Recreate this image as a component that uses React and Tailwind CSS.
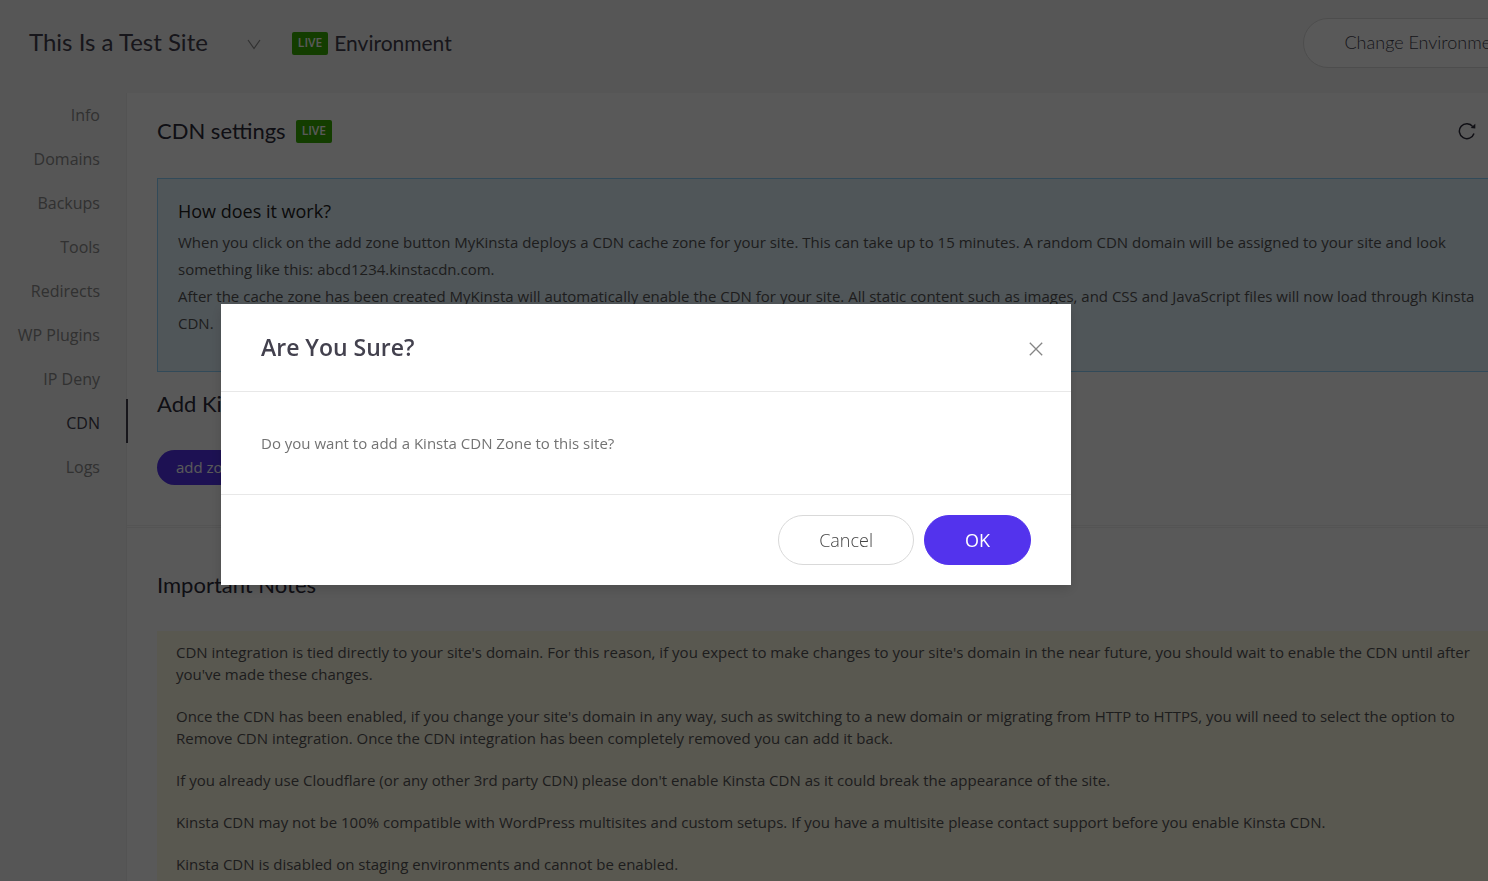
import { useState } from 'react';

const navItems = ['Info', 'Domains', 'Backups', 'Tools', 'Redirects', 'WP Plugins', 'IP Deny', 'CDN', 'Logs'];

const notes = [
    "CDN integration is tied directly to your site's domain. For this reason, if you expect to make changes to your site's domain in the near future, you should wait to enable the CDN until after you've made these changes.",
    "Once the CDN has been enabled, if you change your site's domain in any way, such as switching to a new domain or migrating from HTTP to HTTPS, you will need to select the option to Remove CDN integration. Once the CDN integration has been completely removed you can add it back.",
    "If you already use Cloudflare (or any other 3rd party CDN) please don't enable Kinsta CDN as it could break the appearance of the site.",
    'Kinsta CDN may not be 100% compatible with WordPress multisites and custom setups. If you have a multisite please contact support before you enable Kinsta CDN.',
    'Kinsta CDN is disabled on staging environments and cannot be enabled.',
];

const LiveBadge = () => (
    <span className="flex h-[23px] items-center rounded-xs bg-[#37ae00] px-[6px] text-xs font-semibold text-white">
        LIVE
    </span>
);

const Header = () => (
    <header className="flex h-[93px] items-center pb-[7px] pl-[29px] font-['Lato',sans-serif] text-[#43414e]">
        <button type="button" className="flex items-center gap-[39px] pb-[2px] text-2xl" aria-label="Select site">
            This Is a Test Site
            <svg className="mt-1 h-[11px] w-[14px]" viewBox="0 0 14 11" fill="none" stroke="#8c8c8c" strokeWidth="1.2">
                <path d="M1 1l6 8.500 6-8.500" />
            </svg>
        </button>
        <div className="ml-[31px] flex items-center gap-[6px] text-[21px]">
            <div className="font-['Open_Sans',sans-serif]"><LiveBadge /></div>
            Environment
        </div>
        <button type="button" className="ml-auto h-[50px] rounded-full border border-[#dcdcdc] bg-white px-10 pb-[3px] text-lg font-light whitespace-nowrap">
            Change Environment
        </button>
    </header>
);

const Sidebar = () => (
    <nav className="-mt-[2px] w-[126px] shrink-0">
        {navItems.map((item) => (
            <a
                key={item}
                href="#"
                className={
                    item === 'CDN'
                        ? 'relative flex h-11 items-center justify-end pt-1 pr-[26px] text-[#43414e] after:absolute after:top-0 after:-right-[2px] after:h-full after:w-[2px] after:bg-[#43414e]'
                        : 'flex h-11 items-center justify-end pt-1 pr-[26px] text-[#8c8c8c]'
                }
            >
                {item}
            </a>
        ))}
    </nav>
);

const Heading = ({ children }) => (
    <h2 className="font-['Lato',sans-serif] text-[22px] leading-8 text-[#2d2b3a]">{children}</h2>
);

const CdnPage = ({ onAdd }) => (
    <main className="min-w-0 flex-1 border-l border-[#ededed] bg-white">
        <section className="border-b border-[#f0f0f0] pt-[22px] pr-10 pb-10 pl-[30px]">
            <div className="flex items-center gap-[10px]">
                <Heading>CDN settings</Heading>
                <LiveBadge />
                <button type="button" aria-label="Refresh" className="mr-8 ml-auto">
                    <svg className="h-[18px] w-[18px]" viewBox="0 0 18 18" fill="none" stroke="#2d2b3a" strokeWidth="1.5">
                        <path d="M16 11.500A7.500 7.500 0 1 1 14.800 4.600" />
                        <path d="M17.300 1.800v4.700l-4.600-.6z" fill="#2d2b3a" stroke="none" />
                    </svg>
                </button>
            </div>
            <div className="mt-[31px] border border-[#91d5ff] bg-[#e6f5ff] px-5 pt-[19px] pb-[34px]">
                <h3 className="mb-1 text-lg leading-[27px] text-[#222222]">How does it work?</h3>
                <p className="text-[15px] leading-[27px]">
                    When you click on the add zone button MyKinsta deploys a CDN cache zone for your site. This can take up to 15 minutes. A random CDN domain will be assigned to your site and look something like this: abcd1234.kinstacdn.com.
                    <br />
                    After the cache zone has been created MyKinsta will automatically enable the CDN for your site. All static content such as images, and CSS and JavaScript files will now load through Kinsta CDN.
                </p>
            </div>
            <div className="mt-4">
                <Heading>Add Kinsta CDN</Heading>
            </div>
            <button type="button" onClick={onAdd} className="mt-[30px] block h-[35px] rounded-full bg-[#5333ed] px-[19px] text-[15px] text-white">
                add zone
            </button>
        </section>
        <section className="mt-px border-t border-[#f0f0f0] pt-[41px] pr-10 pb-10 pl-[30px]">
            <Heading>Important Notes</Heading>
            <div className="mt-[30px] flex flex-col gap-5 bg-[#fffbe6] px-[19px] py-[10px] text-[15px] leading-[22px]">
                {notes.map((note) => (
                    <p key={note}>{note}</p>
                ))}
            </div>
        </section>
    </main>
);

const ConfirmModal = ({ onClose }) => (
    <div className="fixed inset-0 bg-black/65 pt-[304px] pl-[221px]">
        <div role="dialog" aria-modal="true" aria-labelledby="confirm-title" className="w-[850px] max-w-full bg-white shadow-[0_4px_12px_rgba(0,0,0,0.15)]">
            <div className="flex h-[88px] items-center justify-between border-b border-[#e8e8e8] pr-[28px] pl-10">
                <h2 id="confirm-title" className="text-[23px] font-semibold text-[#43414e]">Are You Sure?</h2>
                <button type="button" aria-label="Close" onClick={onClose}>
                    <svg className="mt-[2px] h-[14px] w-[14px]" viewBox="0 0 14 14" fill="none" stroke="#858585" strokeWidth="1.3">
                        <path d="M.8.8l12.400 12.400M13.200.8L.8 13.200" />
                    </svg>
                </button>
            </div>
            <p className="px-10 py-10 text-[15px] leading-[22px] text-[#737373]">Do you want to add a Kinsta CDN Zone to this site?</p>
            <div className="flex justify-end gap-[10px] border-t border-[#e8e8e8] px-10 py-5 text-lg">
                <button type="button" onClick={onClose} className="h-[50px] rounded-full border border-[#d9d9d9] px-10 font-light text-[#444444]">
                    Cancel
                </button>
                <button type="button" onClick={onClose} className="h-[50px] rounded-full border border-[#5333ed] bg-[#5333ed] px-10 text-white">
                    OK
                </button>
            </div>
        </div>
    </div>
);

const App = () => {
    const [open, setOpen] = useState(true);

    return (
        <div className="h-screen overflow-hidden bg-[#f6f6f6] font-['Open_Sans',sans-serif] text-base text-[#555555]">
            <div className="w-[calc(100%+60px)]">
                <Header />
                <div className="flex">
                    <Sidebar />
                    <CdnPage onAdd={() => setOpen(true)} />
                </div>
            </div>
            {open && <ConfirmModal onClose={() => setOpen(false)} />}
        </div>
    );
};

export default App;
